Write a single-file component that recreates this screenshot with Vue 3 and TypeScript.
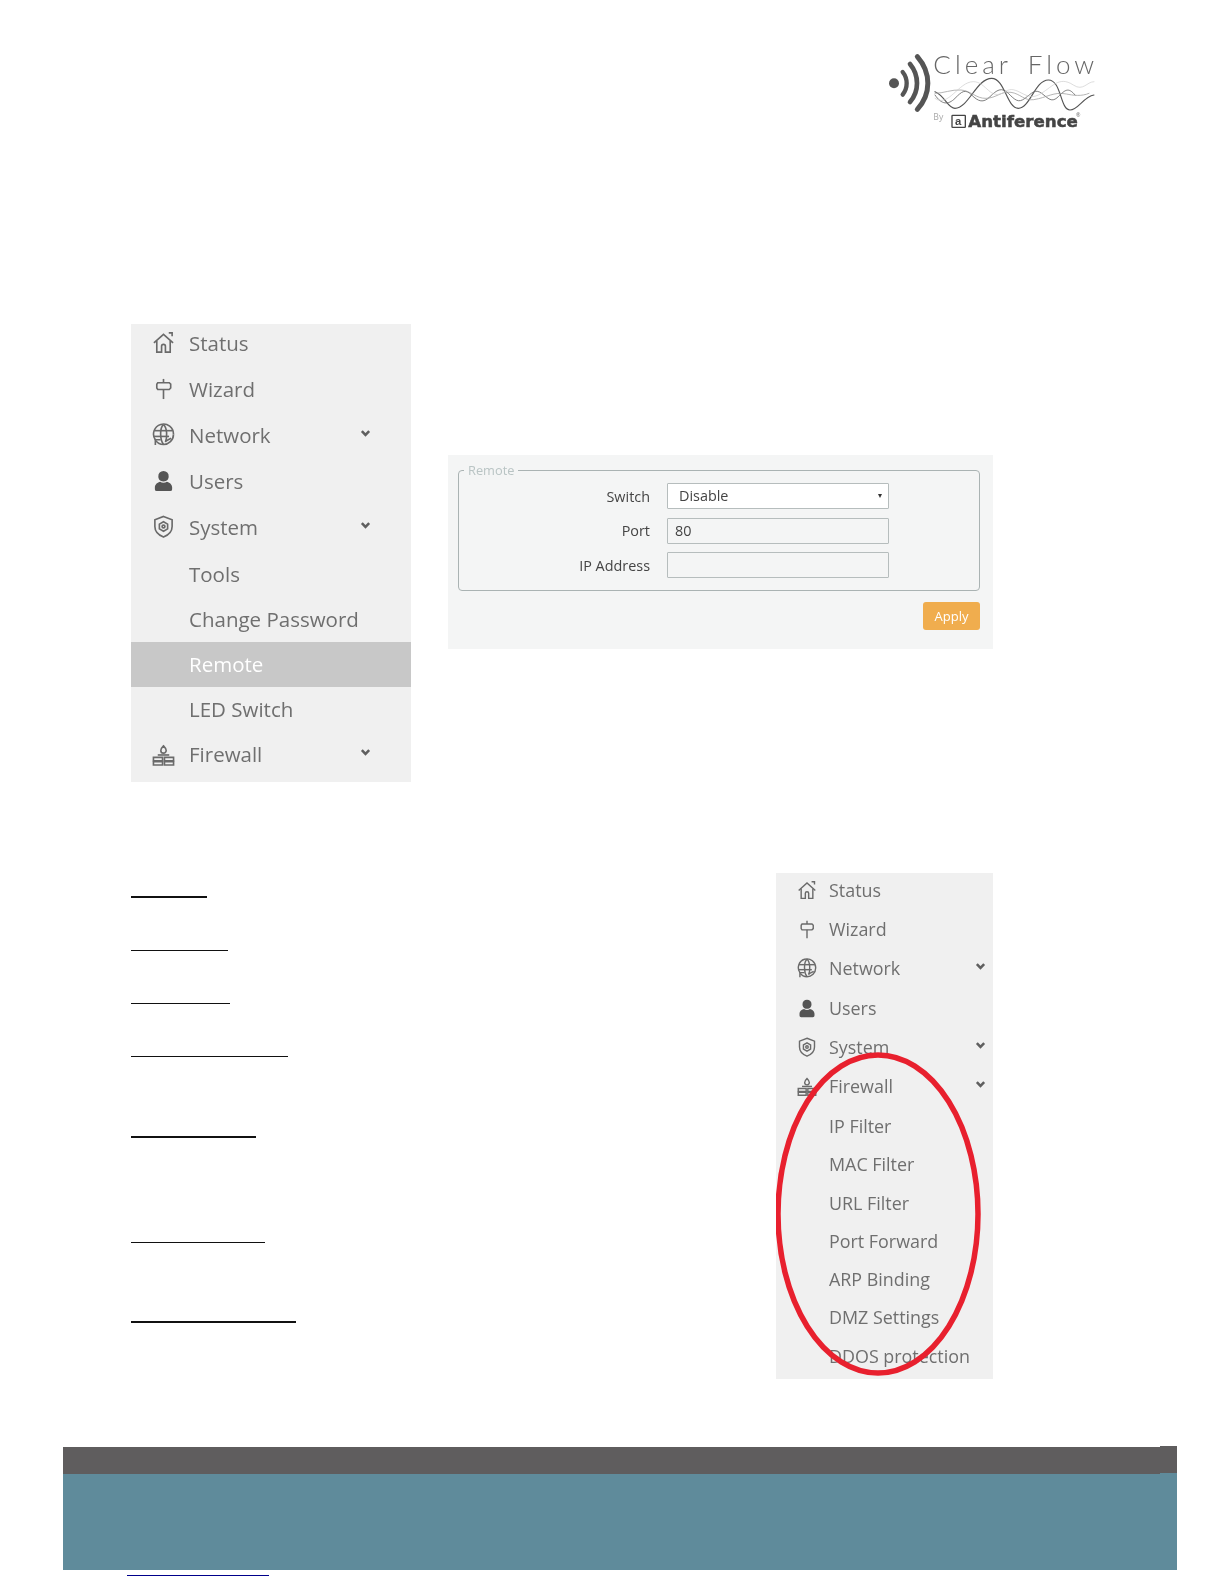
<script setup lang="ts">
interface Row { label: string; icon?: string; caret?: boolean; active?: boolean; sub?: boolean }

const icons: Record<string, { stroke: string[]; fill: string[] }> = {
  home: { stroke: ['M2 12.5 12 3.5l10 9', 'M5 10.5V22h5v-6a2 2 0 0 1 4 0v6h5V10.5', 'M17.5 2H21v3.5'], fill: [] },
  sign: { stroke: ['M12 2V6', 'M12 13v10', 'M6 6h12l1.500 1.500v4L18 13H6l-1-1.500v-4z'], fill: [] },
  globe: {
    stroke: ['M3.500 17.500A10.400 10.400 0 1 1 22.400 12', 'M12 1.600C8 5 8 17 12 22.400', 'M12 1.600C16 5 16 15 14 20', 'M2.500 8h19', 'M1.800 14h16', 'M22.400 12c0 6-5 10.400-10.400 10.400-3 0-6-1-8-4', 'M3.500 23v-5.500h5.500', 'M20 16l-6 3'],
    fill: [],
  },
  user: { stroke: [], fill: ['M12 2a5.400 5.400 0 0 1 5.400 5.800c0 2.600-1.600 5.200-5.400 5.200S6.600 10.400 6.600 7.800A5.400 5.400 0 0 1 12 2z', 'M3 19c0-3 3-5.400 5.500-5.800 1.800 1.500 5.200 1.500 7 0C18 13.600 21 16 21 19v2a2 2 0 0 1-2 2H5a2 2 0 0 1-2-2z'] },
  shield: { stroke: ['M12 1.500 21 5v7c0 5.500-4 9-9 11-5-2-9-5.500-9-11V5z', 'M12 7l4.300 2.500v5L12 17l-4.300-2.500v-5z', 'M10.500 12a1.500 1.500 0 1 0 3 0 1.500 1.500 0 1 0-3 0z'], fill: [] },
  wall: {
    stroke: ['M1.500 15h9.500v3.500H1.500z', 'M13 15h9.500v3.500H13z', 'M1.500 19.500h9.500V23H1.500z', 'M13 19.500h9.500V23H13z', 'M6 12.500h12', 'M12 3c1.800 1.800 2.800 3 2.800 4.800a2.800 2.800 0 0 1-5.600 0C9.200 6 10.200 4.800 12 3z'],
    fill: [],
  },
}

const menus: { cls: string; rows: Row[] }[] = [
  {
    cls: 'menu-large',
    rows: [
      { label: 'Status', icon: 'home' },
      { label: 'Wizard', icon: 'sign' },
      { label: 'Network', icon: 'globe', caret: true },
      { label: 'Users', icon: 'user' },
      { label: 'System', icon: 'shield', caret: true },
      { label: 'Tools', sub: true },
      { label: 'Change Password', sub: true },
      { label: 'Remote', sub: true, active: true },
      { label: 'LED Switch', sub: true },
      { label: 'Firewall', icon: 'wall', caret: true, sub: true },
    ],
  },
  {
    cls: 'menu-small',
    rows: [
      { label: 'Status', icon: 'home' },
      { label: 'Wizard', icon: 'sign' },
      { label: 'Network', icon: 'globe', caret: true },
      { label: 'Users', icon: 'user' },
      { label: 'System', icon: 'shield', caret: true },
      { label: 'Firewall', icon: 'wall', caret: true },
      { label: 'IP Filter', sub: true },
      { label: 'MAC Filter', sub: true },
      { label: 'URL Filter', sub: true },
      { label: 'Port Forward', sub: true },
      { label: 'ARP Binding', sub: true },
      { label: 'DMZ Settings', sub: true },
      { label: 'DDOS protection', sub: true },
    ],
  },
]

const rules = [
  { w: 76, gap: 23, t: 2 },
  { w: 97, gap: 51.5, t: 1 },
  { w: 99, gap: 52, t: 1 },
  { w: 157, gap: 52, t: 1 },
  { w: 125, gap: 79, t: 2 },
  { w: 134, gap: 104, t: 1 },
  { w: 165, gap: 78.5, t: 2 },
]
</script>

<template>
  <div class="page">
    <header class="head">
      <svg class="logo" viewBox="0 0 720 300" width="240" height="100" role="img" aria-label="Clear Flow by Antiference">
        <circle cx="72" cy="130" r="15" fill="#555" />
        <g fill="none" stroke="#555" stroke-linecap="round">
          <path d="M98 96c16 20 16 48 0 68" stroke-width="13" />
          <path d="M120 72c28 34 28 82 0 114" stroke-width="14" />
          <path d="M142 50c42 48 42 112 0 158" stroke-width="15" />
        </g>
        <text x="190" y="102" class="logo-title">Clear Flow</text>
        <g fill="none" stroke-linecap="round">
          <path d="M195 155c30 12 38 50 60 50 40 0 65-90 110-90 40 0 45 90 80 90 35 0 50-85 90-85 40 0 35 90 65 90 25 0 40-40 72-45" stroke="#555" stroke-width="3.500" />
          <path d="M195 165c20 30 40 30 60 10s30-30 50-10 35 25 55 5 35-30 55-10 30 30 50 15 30-30 50-15 30 30 50 10 30-30 50-5" stroke="#666" stroke-width="2.500" />
          <path d="M195 160c25 0 50-12 78-10 30 2 45 26 75 25 32-1 45-22 75-18 28 4 40 26 68 22 40-6 60-25 98-17 20 4 45 8 68-2" stroke="#999" stroke-width="2.200" />
          <path d="M195 175c40 30 70-50 115-50 40 0 50 60 95 30 35-24 60 30 100 10 40-20 60-60 105-30 30 20 40-10 62-10" stroke="#ccc" stroke-width="2" />
        </g>
        <text x="190" y="240" class="logo-by">By</text>
        <rect x="246" y="226" width="40" height="36" rx="2" fill="none" stroke="#444" stroke-width="4" />
        <text x="255" y="256" class="logo-a">a</text>
        <text x="295" y="260" class="logo-brand">Antiference</text>
        <text x="618" y="232" class="logo-reg">®</text>
      </svg>
    </header>

    <section class="top">
      <nav v-for="menu in menus.slice(0, 1)" :key="menu.cls" class="menu" :class="menu.cls">
        <div v-for="row in menu.rows" :key="row.label" class="row" :class="{ active: row.active, sub: row.sub }">
          <svg v-if="row.icon" class="icon" viewBox="0 0 24 24">
            <path v-for="d in icons[row.icon].stroke" :key="d" :d="d" class="ic-line" />
            <path v-for="d in icons[row.icon].fill" :key="d" :d="d" class="ic-fill" />
          </svg>
          <span v-else class="icon"></span>
          <span class="label">{{ row.label }}</span>
          <svg v-if="row.caret" class="caret" viewBox="0 0 12 12"><path d="M2 3.500l4 4 4-4" /></svg>
        </div>
      </nav>

      <div class="panel">
        <fieldset class="box">
          <legend>Remote</legend>
          <div class="field">
            <span class="f-label">Switch</span>
            <div class="control select"><span>Disable</span><i class="tri"></i></div>
          </div>
          <div class="field">
            <span class="f-label">Port</span>
            <div class="control">80</div>
          </div>
          <div class="field">
            <span class="f-label">IP Address</span>
            <div class="control"></div>
          </div>
        </fieldset>
        <div class="actions"><button type="button" class="apply">Apply</button></div>
      </div>
    </section>

    <section class="lower">
      <div class="rules">
        <div v-for="r in rules" :key="r.w" class="rule" :style="{ width: r.w + 'px', marginTop: r.gap + 'px', height: r.t + 'px' }"></div>
      </div>
      <nav v-for="menu in menus.slice(1)" :key="menu.cls" class="menu" :class="menu.cls">
        <div v-for="row in menu.rows" :key="row.label" class="row" :class="{ sub: row.sub }">
          <svg v-if="row.icon" class="icon" viewBox="0 0 24 24">
            <path v-for="d in icons[row.icon].stroke" :key="d" :d="d" class="ic-line" />
            <path v-for="d in icons[row.icon].fill" :key="d" :d="d" class="ic-fill" />
          </svg>
          <span v-else class="icon"></span>
          <span class="label">{{ row.label }}</span>
          <svg v-if="row.caret" class="caret" viewBox="0 0 12 12"><path d="M2 3.500l4 4 4-4" /></svg>
        </div>
        <svg class="ring" viewBox="0 0 217 506" width="217" height="506">
          <ellipse cx="102" cy="341" rx="100" ry="159" fill="none" stroke="#e8202e" stroke-width="5.500" />
        </svg>
      </nav>
    </section>

    <footer class="foot">
      <div class="foot-top">
        <div class="foot-dark"></div>
        <span class="foot-tab"></span>
      </div>
      <div class="foot-teal"></div>
      <div class="foot-link"></div>
    </footer>
  </div>
</template>

<style scoped>
.page {
  width: 1224px;
  height: 1584px;
  overflow: hidden;
  background: #fff;
  font-family: "Open Sans", "Noto Sans", sans-serif;
}
.head {
  height: 324px;
  padding: 40px 0 0 870px;
  box-sizing: border-box;
}
.logo {
  display: block;
  filter: blur(0.35px);
}
.logo-title {
  font-family: Lato, "Open Sans", sans-serif;
  font-weight: 300;
  font-size: 78px;
  letter-spacing: 12px;
  word-spacing: 16px;
  fill: #666;
}
.logo-by {
  font-family: "Open Sans", sans-serif;
  font-size: 26px;
  fill: #aaa;
}
.logo-a {
  font-family: "Liberation Sans", sans-serif;
  font-weight: 700;
  font-size: 34px;
  fill: #444;
}
.logo-brand {
  font-family: "DejaVu Sans", sans-serif;
  font-weight: 700;
  font-size: 50px;
  fill: #444;
  stroke: #444;
  stroke-width: 1.500px;
}
.logo-reg {
  font-family: "Open Sans", sans-serif;
  font-size: 16px;
  fill: #666;
}

.top {
  display: flex;
  align-items: flex-start;
  padding-left: 131px;
}
.menu {
  position: relative;
  overflow: hidden;
  background: #f0f0f0;
  color: #6f6f6f;
  box-sizing: border-box;
  filter: blur(0.3px);
}
.row {
  display: flex;
  align-items: center;
  box-sizing: border-box;
}
.icon {
  flex: none;
  display: block;
}
.ic-line {
  fill: none;
  stroke: #6a6a6a;
  stroke-width: 1.700;
}
.ic-fill {
  fill: #555;
}
.caret {
  flex: none;
  margin-left: auto;
  margin-top: -3px;
  fill: none;
  stroke: #5f5f5f;
  stroke-width: 2.800;
}
.row.active {
  background: #c8c8c8;
  color: #fff;
}

.menu-large {
  width: 280px;
  height: 458px;
  font-size: 20.500px;
  flex: none;
}
.menu-large .row {
  height: 46px;
  padding: 0 40px 1px 20.500px;
}
.menu-large .row:first-child {
  margin-top: -4px;
}
.menu-large .row.sub {
  height: 45px;
}
.menu-large .row.sub:nth-child(6) {
  margin-top: 2px;
}
.menu-large .icon {
  width: 23px;
  height: 23px;
  margin-right: 14.500px;
}
.menu-large .caret {
  width: 11px;
  height: 11px;
}

.panel {
  flex: none;
  width: 545px;
  height: 194px;
  margin: 131px 0 0 37px;
  padding: 8px 13px 0 10px;
  box-sizing: border-box;
  background: #f4f5f5;
  color: #444;
  font-size: 14.400px;
  filter: blur(0.2px);
}
.box {
  margin: 0;
  padding: 6px 0 0;
  height: 128px;
  box-sizing: border-box;
  border: 1px solid #aab3b3;
  border-radius: 4px;
}
legend {
  margin-left: 5px;
  padding: 0 4px;
  font-size: 12.800px;
  line-height: 14px;
  color: #b9c4c4;
}
.field {
  display: flex;
  align-items: center;
  height: 26px;
  margin-bottom: 8.500px;
}
.f-label {
  width: 191px;
  text-align: right;
  margin-right: 17px;
}
.control {
  width: 222px;
  height: 26px;
  box-sizing: border-box;
  padding: 0 7px;
  line-height: 24px;
  border: 1px solid #b6bdbd;
  border-radius: 1px;
}
.select {
  display: flex;
  align-items: center;
  justify-content: space-between;
  padding: 0 6px 0 11px;
  background: #fff;
}
.tri {
  width: 0;
  height: 0;
  border-left: 2.500px solid transparent;
  border-right: 2.500px solid transparent;
  border-top: 4px solid #333;
}
.actions {
  display: flex;
  justify-content: flex-end;
  margin-top: 11px;
}
.apply {
  width: 57px;
  height: 28px;
  padding: 0;
  border: 0;
  border-radius: 3px;
  background: #f0ad4e;
  color: #fff;
  font: 13px "Open Sans", sans-serif;
}

.lower {
  display: flex;
  justify-content: space-between;
  align-items: flex-start;
  margin-top: 91px;
  padding: 0 231px 0 131px;
}
.rules {
  display: flex;
  flex-direction: column;
}
.rule {
  background: #111;
}
.menu-small {
  width: 217px;
  height: 506px;
  font-size: 17.900px;
  flex: none;
}
.menu-small .row {
  height: 39.300px;
  padding: 0 7px 1px 21px;
}
.menu-small .row:first-child {
  margin-top: -2.500px;
}
.menu-small .row.sub {
  height: 38.300px;
}
.menu-small .row.sub:nth-child(7) {
  margin-top: 1px;
}
.menu-small .icon {
  width: 20px;
  height: 20px;
  margin-right: 12px;
}
.menu-small .caret {
  width: 11px;
  height: 11px;
}
.ring {
  position: absolute;
  left: 0;
  top: 0;
}

.foot {
  margin: 68px 47px 0 63px;
}
.foot-top {
  position: relative;
  background: #5f8b9b;
}
.foot-dark {
  height: 27px;
  margin-right: 17px;
  background: #5f5d5e;
}
.foot-tab {
  position: absolute;
  right: 0;
  top: -1px;
  width: 17px;
  height: 27px;
  background: #5f5d5e;
}
.foot-teal {
  height: 96px;
  background: #5f8b9b;
}
.foot-link {
  width: 142px;
  height: 1px;
  margin: 5px 0 0 64px;
  background: #00008b;
}
</style>

<style>
html,
body {
  margin: 0;
  background: #fff;
}
</style>
